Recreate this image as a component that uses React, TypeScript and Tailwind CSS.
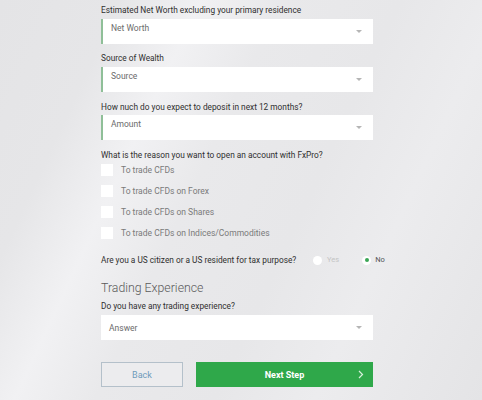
import React from "react";

function Select({ text, accent, centered }: { text: string; accent?: boolean; centered?: boolean }) {
  return (
    <div
      className={`relative h-[25px] w-[272px] bg-white ${accent ? "border-l-2 border-[#8fbf98]" : ""} flex ${centered ? "items-center" : "items-start pt-[3px]"} pl-[8px] text-[8.5px] text-[#6b6b6b]`}
    >
      <span>{text}</span>
      <span className="absolute right-[11px] top-[11px] h-0 w-0 border-l-[3px] border-r-[3px] border-t-[3px] border-l-transparent border-r-transparent border-t-[#b5b5b5]" />
    </div>
  );
}

function Check({ text }: { text: string }) {
  return (
    <div className="flex h-[21px] items-center">
      <div className="h-[12px] w-[12px] bg-white" />
      <span className="ml-[8px] text-[8.5px] text-[#7a7a7a]">{text}</span>
    </div>
  );
}

export default function App() {
  return (
    <div
      className="h-[400px] w-[482px] overflow-hidden text-[8.3px] leading-[12px] text-[#2f2f2f]"
      style={{
        fontFamily: "Roboto, 'Liberation Sans', sans-serif",
        background:
          "linear-gradient(115deg, #e4e4e6 0%, #e6e6e8 18%, #f1f1f3 30%, #e9e9eb 42%, #e7e7e9 60%, #ececee 75%, #e4e4e6 100%)",
      }}
    >
      <div className="ml-[101px] flex w-[272px] flex-col pt-[4px]">
        <div>Estimated Net Worth excluding your primary residence</div>
        <div className="mt-[3px]">
          <Select text="Net Worth" accent />
        </div>
        <div className="mt-[8px]">Source of Wealth</div>
        <div className="mt-[3px]">
          <Select text="Source" accent />
        </div>
        <div className="mt-[9px]">How nuch do you expect to deposit in next 12 months?</div>
        <div className="mt-[2px]">
          <Select text="Amount" accent />
        </div>
        <div className="mt-[9px]">What is the reason you want to open an account with FxPro?</div>
        <div className="mt-[-2px] flex flex-col">
          <Check text="To trade CFDs" />
          <Check text="To trade CFDs on Forex" />
          <Check text="To trade CFDs on Shares" />
          <Check text="To trade CFDs on Indices/Commodities" />
        </div>
        <div className="mt-[11px] flex items-center">
          <span className="w-[212px] shrink-0">Are you a US citizen or a US resident for tax purpose?</span>
          <div className="flex shrink-0 items-center">
            <span className="h-[9px] w-[9px] rounded-full bg-white" />
            <span className="ml-[5px] text-[7.5px] text-[#c4c4c4]">Yes</span>
          </div>
          <div className="ml-[23px] flex shrink-0 items-center">
            <span className="flex h-[9px] w-[9px] items-center justify-center rounded-full bg-white">
              <span className="h-[4px] w-[4px] rounded-full bg-[#3aa655]" />
            </span>
            <span className="ml-[4px] text-[7.5px] text-[#555]">No</span>
          </div>
        </div>
        <div className="mt-[14px] text-[12.3px] font-light leading-[16px] text-[#5a5a5a]">Trading Experience</div>
        <div className="mt-[4px]">Do you have any trading experience?</div>
        <div className="mt-[3px]">
          <Select text="Answer" centered />
        </div>
        <div className="mt-[22px] flex gap-[13px]">
          <button className="h-[25px] w-[82px] border border-[#b4c0ca] bg-[#ececee] text-[9px] text-[#6e9bbb]">
            Back
          </button>
          <button className="relative flex h-[25px] w-[177px] items-center justify-center bg-[#2fa84a] text-[9px] font-bold text-white">
            Next Step
            <svg className="absolute right-[9px] top-[8px]" width="6" height="9" viewBox="0 0 6 9">
              <path d="M1 1l3.5 3.5L1 8" fill="none" stroke="#d9f0dd" strokeWidth="1.2" />
            </svg>
          </button>
        </div>
      </div>
    </div>
  );
}
